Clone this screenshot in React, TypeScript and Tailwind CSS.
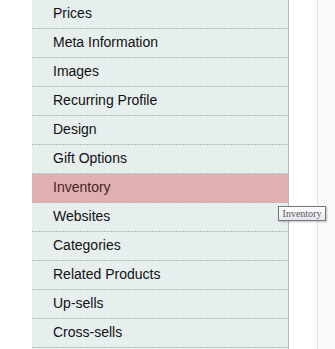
const tabs = [
  "Prices",
  "Meta Information",
  "Images",
  "Recurring Profile",
  "Design",
  "Gift Options",
  "Inventory",
  "Websites",
  "Categories",
  "Related Products",
  "Up-sells",
  "Cross-sells",
];

const active = "Inventory";

export default function App() {
  return (
    <div className="relative flex h-[349px] w-[335px] overflow-hidden bg-white font-['Liberation_Sans',Arial,sans-serif]">
      <div className="w-[32px] shrink-0" />

      <ul className="w-[257px] shrink-0 border-r border-[#b4b9b9] bg-[#e7eeee]">
        {tabs.map((t) => (
          <li
            key={t}
            className={
              t === active
                ? "relative h-[29px] bg-[#e0b0b0] pl-[21px] text-[14px] leading-[27px] text-[#472222]"
                : "relative h-[29px] pl-[21px] text-[14px] leading-[27px] text-[#111111]"
            }
          >
            {t}
            {/* dotted rule under each tab */}
            <span className="absolute bottom-0 left-0 right-0 h-px bg-[linear-gradient(to_right,#b6bdbd_2px,transparent_2px)] bg-[length:3px_1px]" />
          </li>
        ))}
      </ul>

      <div className="w-[28px] shrink-0" />
      <div className="flex-1 border-l border-[#e3e3e3] bg-[#fafafa]" />

      {/* native-looking tooltip */}
      <div className="absolute left-[278px] top-[206px] flex h-[15px] w-[48px] items-center justify-center border border-[#767676] bg-[linear-gradient(#ffffff,#e4e5f0)] font-['Liberation_Serif',serif] text-[10px] leading-none text-[#575757] shadow-[1px_1px_2px_rgba(0,0,0,0.25)]">
        Inventory
      </div>
    </div>
  );
}
